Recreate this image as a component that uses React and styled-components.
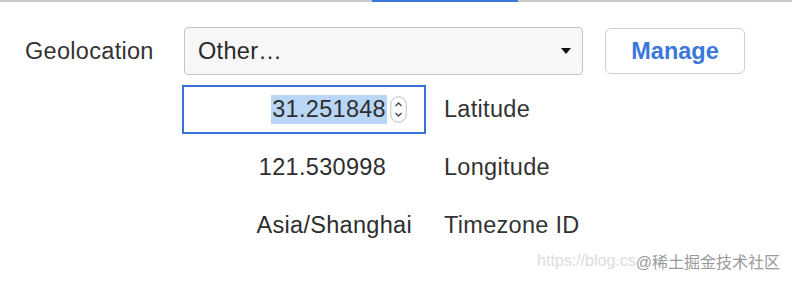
import React from "react";
import styled, { createGlobalStyle } from "styled-components";

const Global = createGlobalStyle`
  html, body { margin: 0; padding: 0; background: #ffffff; }
  body { font-family: "Liberation Sans", Arial, sans-serif; color: #303030; }
  #root { width: 792px; height: 282px; overflow: hidden; position: relative; }
`;

const Page = styled.div`
  width: 792px;
  height: 282px;
  display: flex;
  flex-direction: column;
`;

const TabStrip = styled.div`
  height: 2px;
  background: #c9c9c9;
  display: flex;
`;

const ActiveTab = styled.div`
  margin-left: 372px;
  width: 146px;
  background: #3a75d9;
`;

const Body = styled.div`
  display: flex;
  flex-direction: column;
  padding: 25px 0 0 25px;
`;

const TopRow = styled.div`
  display: flex;
  align-items: center;
  height: 48px;
`;

const Text = `
  font-size: 23.5px;
  letter-spacing: 0.3px;
`;

const RowLabel = styled.div`
  width: 159px;
  ${Text}
  color: #333;
`;

const Select = styled.div`
  box-sizing: border-box;
  width: 399px;
  height: 48px;
  border: 1.5px solid #c4c4c4;
  border-radius: 4px;
  background: #f7f7f7;
  display: flex;
  align-items: center;
  justify-content: space-between;
  padding: 0 11px 0 13px;
  ${Text}
  color: #2a2a2a;
`;

const Caret = styled.span`
  width: 0;
  height: 0;
  border-left: 5px solid transparent;
  border-right: 5px solid transparent;
  border-top: 6px solid #111;
`;

const Button = styled.div`
  box-sizing: border-box;
  margin-left: 22px;
  width: 140px;
  height: 46px;
  border: 1.5px solid #cfcfcf;
  border-radius: 6px;
  background: #fff;
  display: flex;
  align-items: center;
  justify-content: center;
  font-size: 23.5px;
  font-weight: bold;
  color: #3a78d9;
`;

const Fields = styled.div`
  display: grid;
  grid-template-columns: 244px auto;
  grid-auto-rows: 49px;
  row-gap: 9px;
  column-gap: 18px;
  margin: 10px 0 0 157px;
  align-items: center;
`;

const ValueBox = styled.div`
  box-sizing: border-box;
  height: 49px;
  display: flex;
  align-items: center;
  justify-content: flex-end;
  padding-right: ${(p) => p.$pad}px;
  border: 2px solid ${(p) => (p.$focused ? "#3b73d4" : "transparent")};
  ${Text}
  color: #2e2e2e;
`;

const Selected = styled.span`
  background: #b9d6f7;
  line-height: 29px;
  padding: 0 1px;
`;

const Spinner = styled.svg`
  margin-left: 3px;
  flex: none;
`;

const FieldLabel = styled.div`
  ${Text}
  color: #333;
`;

const Watermark = styled.div`
  display: flex;
  justify-content: flex-end;
  align-items: center;
  margin-top: -1px;
  padding-right: 12px;
  font-size: 16px;
  font-family: "Liberation Sans", "Noto Sans CJK SC", sans-serif;
`;

const Faint = styled.span`
  color: #dcdcdc;
`;

const Mark = styled.span`
  color: #9a9a9a;
  text-shadow: 0 0 2px #fff;
`;

export default function App() {
  return (
    <Page>
      <Global />
      <TabStrip>
        <ActiveTab />
      </TabStrip>
      <Body>
        <TopRow>
          <RowLabel>Geolocation</RowLabel>
          <Select>
            <span>Other…</span>
            <Caret />
          </Select>
          <Button>Manage</Button>
        </TopRow>
        <Fields>
          <ValueBox $focused $pad={17}>
            <Selected>31.251848</Selected>
            <Spinner width="17" height="27" viewBox="0 0 17 27">
              <rect x="0.75" y="0.75" width="15.5" height="25.5" rx="7.75" fill="#fff" stroke="#bdbdbd" strokeWidth="1" />
              <path d="M5.5 10 L8.5 7 L11.5 10" fill="none" stroke="#444" strokeWidth="1.3" />
              <path d="M5.5 17 L8.5 20 L11.5 17" fill="none" stroke="#444" strokeWidth="1.3" />
            </Spinner>
          </ValueBox>
          <FieldLabel>Latitude</FieldLabel>
          <ValueBox $pad={38}>121.530998</ValueBox>
          <FieldLabel>Longitude</FieldLabel>
          <ValueBox $pad={12}>Asia/Shanghai</ValueBox>
          <FieldLabel>Timezone ID</FieldLabel>
        </Fields>
        <Watermark>
          <Faint>https://blog.cs</Faint>
          <Mark>@稀土掘金技术社区</Mark>
        </Watermark>
      </Body>
    </Page>
  );
}
